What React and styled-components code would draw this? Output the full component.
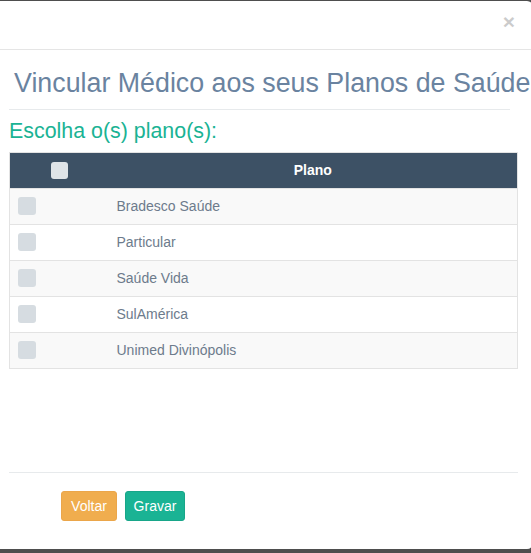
import React from "react";
import styled, { createGlobalStyle } from "styled-components";

const Global = createGlobalStyle`
  html, body {
    margin: 0;
    padding: 0;
    overflow: hidden;
    background: #4e4e4e;
    font-family: "Liberation Sans", Arial, sans-serif;
  }
  * { box-sizing: border-box; }
`;

const Modal = styled.div`
  margin-top: 1px;
  width: 533px;
  height: 548px;
  background: #fff;
  border-radius: 0 6px 6px 0;
  display: flex;
  flex-direction: column;
`;

const Header = styled.div`
  height: 49px;
  border-bottom: 1px solid #e5e5e5;
  display: flex;
  justify-content: flex-end;
  align-items: flex-start;
  padding: 10px 18px 0 0;
`;

const Close = styled.button`
  border: 0;
  background: none;
  padding: 0;
  font-family: "Liberation Sans", Arial, sans-serif;
  font-size: 21px;
  font-weight: bold;
  line-height: 1;
  color: #000;
  opacity: 0.2;
  cursor: pointer;
`;

const Body = styled.div`
  flex: 1;
  padding: 16px 15px 0 9px;
`;

const Title = styled.h2`
  margin: 0 0 0 5px;
  font-size: 26.8px;
  line-height: 34px;
  font-weight: normal;
  color: #6a83a0;
  white-space: nowrap;
`;

const Rule = styled.div`
  height: 1px;
  background: #e7eaec;
  margin: ${(p) => p.$m || "0"};
`;

const Subtitle = styled.h3`
  margin: 8px 0 0 0;
  font-size: 21.4px;
  line-height: 26px;
  font-weight: normal;
  color: #1ab394;
`;

const Table = styled.table`
  margin-top: 8px;
  width: 509px;
  border-collapse: collapse;
  table-layout: fixed;
  border: 1px solid #e3e3e3;
  font-size: 14px;
`;

const HeadCell = styled.th`
  background: #3d5165;
  color: #fff;
  font-weight: bold;
  height: 36px;
  padding: 0 8px;
  text-align: center;
  vertical-align: middle;
  line-height: 19px;
`;

const Row = styled.tr`
  background: ${(p) => (p.$striped ? "#f9f9f9" : "#fff")};
`;

const Cell = styled.td`
  padding: 8px;
  height: 36px;
  line-height: 19px;
  border-top: 1px solid #e3e3e3;
  color: #6d7b8c;
  vertical-align: top;
`;

const Box = styled.span`
  display: block;
  width: ${(p) => (p.$head ? "17px" : "18px")};
  height: ${(p) => (p.$head ? "17px" : "18px")};
  border-radius: 3px;
  background: ${(p) => (p.$head ? "#dfe4e8" : "#d6dce1")};
  margin: ${(p) => (p.$head ? "0 auto" : "0")};
`;

const Footer = styled.div`
  padding: 0 15px 28px 9px;
`;

const Buttons = styled.div`
  display: flex;
  gap: 8px;
  padding-left: 52px;
  margin-top: 18px;
`;

const Button = styled.button`
  height: 30px;
  width: ${(p) => p.$w}px;
  padding: 0;
  border-radius: 3px;
  border: 1px solid ${(p) => (p.$kind === "warning" ? "#eba64a" : "#18a689")};
  background: ${(p) => (p.$kind === "warning" ? "#f0ad4e" : "#1ab394")};
  color: #fff;
  font-family: "Liberation Sans", Arial, sans-serif;
  font-size: 14px;
  line-height: 28px;
  cursor: pointer;
`;

const plans = [
  "Bradesco Saúde",
  "Particular",
  "Saúde Vida",
  "SulAmérica",
  "Unimed Divinópolis",
];

export default function App() {
  return (
    <>
      <Global />
      <Modal>
        <Header>
          <Close aria-label="Fechar">×</Close>
        </Header>
        <Body>
          <Title>Vincular Médico aos seus Planos de Saúde</Title>
          <Rule $m="9px 8px 0 0" />
          <Subtitle>Escolha o(s) plano(s):</Subtitle>
          <Table>
            <colgroup>
              <col style={{ width: "99px" }} />
              <col />
            </colgroup>
            <thead>
              <tr>
                <HeadCell>
                  <Box $head />
                </HeadCell>
                <HeadCell>Plano</HeadCell>
              </tr>
            </thead>
            <tbody>
              {plans.map((p, i) => (
                <Row key={p} $striped={i % 2 === 0}>
                  <Cell>
                    <Box />
                  </Cell>
                  <Cell>{p}</Cell>
                </Row>
              ))}
            </tbody>
          </Table>
        </Body>
        <Footer>
          <Rule />
          <Buttons>
            <Button $kind="warning" $w={56}>Voltar</Button>
            <Button $kind="primary" $w={60}>Gravar</Button>
          </Buttons>
        </Footer>
      </Modal>
    </>
  );
}
